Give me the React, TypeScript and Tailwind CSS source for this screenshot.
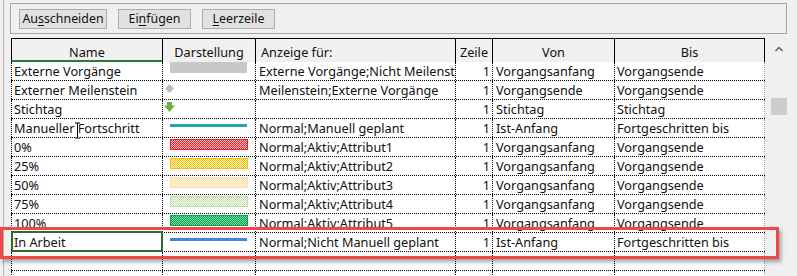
type Row = {
  name: string;
  sym: "gray" | "diamond" | "arrow" | "teal" | "red" | "orange" | "cream" | "lime" | "green" | "blue" | "";
  show: string;
  line: string;
  from: string;
  to: string;
};

const rows: Row[] = [
  { name: "Externe Vorgänge", sym: "gray", show: "Externe Vorgänge;Nicht Meilenstein", line: "1", from: "Vorgangsanfang", to: "Vorgangsende" },
  { name: "Externer Meilenstein", sym: "diamond", show: "Meilenstein;Externe Vorgänge", line: "1", from: "Vorgangsende", to: "Vorgangsende" },
  { name: "Stichtag", sym: "arrow", show: "", line: "1", from: "Stichtag", to: "Stichtag" },
  { name: "Manueller Fortschritt", sym: "teal", show: "Normal;Manuell geplant", line: "1", from: "Ist-Anfang", to: "Fortgeschritten bis" },
  { name: "0%", sym: "red", show: "Normal;Aktiv;Attribut1", line: "1", from: "Vorgangsanfang", to: "Vorgangsende" },
  { name: "25%", sym: "orange", show: "Normal;Aktiv;Attribut2", line: "1", from: "Vorgangsanfang", to: "Vorgangsende" },
  { name: "50%", sym: "cream", show: "Normal;Aktiv;Attribut3", line: "1", from: "Vorgangsanfang", to: "Vorgangsende" },
  { name: "75%", sym: "lime", show: "Normal;Aktiv;Attribut4", line: "1", from: "Vorgangsanfang", to: "Vorgangsende" },
  { name: "100%", sym: "green", show: "Normal;Aktiv;Attribut5", line: "1", from: "Vorgangsanfang", to: "Vorgangsende" },
  { name: "In Arbeit", sym: "blue", show: "Normal;Nicht Manuell geplant", line: "1", from: "Ist-Anfang", to: "Fortgeschritten bis" },
  { name: "", sym: "", show: "", line: "", from: "", to: "" },
  { name: "", sym: "", show: "", line: "", from: "", to: "" },
];

const hatch: Record<string, [string, string, string]> = {
  red: ["#ee1c24", "#ee1c24", "#fbc8c8"],
  orange: ["#ffc000", "#ffc000", "#fff6dc"],
  cream: ["#fbdda6", "#fbdba0", "#fffaf0"],
  lime: ["#bfdfaa", "#bcdda6", "#ffffff"],
  green: ["#00a550", "#00a550", "#86d8a6"],
};

function Hatch({ id }: { id: string }) {
  const [stroke, a, b] = hatch[id];
  return (
    <svg width="78" height="11" shapeRendering="crispEdges" className="block">
      <defs>
        <pattern id={"p-" + id} width="2" height="2" patternUnits="userSpaceOnUse">
          <rect width="2" height="2" fill={b} />
          <rect width="1" height="1" fill={a} />
          <rect x="1" y="1" width="1" height="1" fill={a} />
        </pattern>
      </defs>
      <rect x="0.5" y="0.5" width="77" height="10" fill={`url(#p-${id})`} stroke={stroke} />
    </svg>
  );
}

function Symbol({ sym }: { sym: Row["sym"] }) {
  if (sym === "gray") return <div className="ml-[7px] w-[77px] h-[11px] bg-[#c8c8c8]" />;
  if (sym === "diamond")
    return (
      <div className="pl-[2px] pt-[3px]">
        <svg width="9" height="9" className="block">
          <polygon points="4.5,0 9,4.5 4.5,9 0,4.5" fill="#bdbdbd" />
        </svg>
      </div>
    );
  if (sym === "arrow")
    return (
      <div className="pl-px pt-[2px]">
        <svg width="11" height="10" className="block">
          <rect x="3" y="0" width="5" height="4" fill="#72ad44" />
          <polygon points="0,3.5 11,3.5 5.5,10" fill="#72ad44" />
        </svg>
      </div>
    );
  if (sym === "teal") return <div className="ml-[7px] w-[77px] h-[3px] mt-[5px] bg-[#27a2ae]" />;
  if (sym === "blue") return <div className="ml-[7px] w-[77px] h-[3px] mt-[5px] bg-[#3d87d6]" />;
  if (sym in hatch)
    return (
      <div className="ml-[7px] mt-px">
        <Hatch id={sym} />
      </div>
    );
  return null;
}

function Btn({ pre, key1, post }: { pre: string; key1: string; post: string }) {
  return (
    <div className="h-[20px] px-[6px] border border-[#adadad] bg-[#e1e1e1] flex items-center justify-center leading-[18px]">
      {pre}
      <span className="underline underline-offset-2 decoration-1">{key1}</span>
      {post}
    </div>
  );
}

const dot = "border-l border-dotted border-black";

export default function App() {
  return (
    <div className="w-[797px] h-[276px] bg-[#f0f0f0] relative overflow-hidden flex text-[12.7px] text-[#111] font-['Noto_Sans',sans-serif]">
      {/* left gutter */}
      <div className="w-[10px] shrink-0 pl-[3px]">
        <div className="w-px h-full bg-[#b4b4b4]" />
      </div>

      <div className="flex flex-col pt-[3px]">
        {/* toolbar box */}
        <div className="w-[777px] h-[31px] shrink-0 border border-[#a5a5a5] flex items-start gap-[11px] pl-[8px] pt-[5px] text-[12.4px]">
          <div className="w-[88px]"><Btn pre="Au" key1="s" post="schneiden" /></div>
          <div className="w-[73px]"><Btn pre="Ei" key1="n" post="fügen" /></div>
          <div className="w-[73px]"><Btn pre="" key1="L" post="eerzeile" /></div>
        </div>

        <div className="flex mt-[4px]">
          {/* table */}
          <div className="w-[754px] ml-px bg-white overflow-hidden h-[238px]">
            <div className="flex h-[24px] border-t border-black bg-[#f0f0f0]">
              <div className="w-[151px] border-l border-black border-b-2 border-b-[#2c7a34] text-center pt-[4px] leading-[18px]">Name</div>
              <div className="w-[93px] border-l border-black text-center pt-[4px] leading-[18px]">Darstellung</div>
              <div className="w-[200px] border-l border-black pl-[5px] pt-[4px] leading-[18px]">Anzeige für:</div>
              <div className="w-[37px] border-l border-black text-center pt-[4px] leading-[18px]">Zeile</div>
              <div className="w-[122px] border-l border-black text-center pt-[4px] leading-[18px]">Von</div>
              <div className="w-[151px] border-l border-r border-black text-center pt-[4px] leading-[18px]">Bis</div>
            </div>
            {rows.map((r, i) => (
              <div key={i} className="flex h-[19px] border-b border-dotted border-black leading-[18px] whitespace-nowrap">
                <div className={`w-[151px] ${dot} pl-[2px] relative`}>
                  {r.name}
                  {r.name === "In Arbeit" && (
                    <div className="absolute -left-px -top-[2px] w-[152px] h-[21px] border-2 border-[#2f6b31]" />
                  )}
                  {r.name === "Manueller Fortschritt" && (
                    <svg width="7" height="18" className="absolute left-[62px] top-[3px]">
                      <path d="M1 1h5M3.5 1v15M1 16h5" stroke="#fff" strokeWidth="3" fill="none" />
                      <path d="M1 1h5M3.5 1v15M1 16h5" stroke="#000" strokeWidth="1" fill="none" />
                    </svg>
                  )}
                </div>
                <div className={`w-[93px] ${dot} overflow-hidden`}>
                  <Symbol sym={r.sym} />
                </div>
                <div className={`w-[200px] ${dot} pl-[3px] overflow-hidden`}>{r.show}</div>
                <div className={`w-[37px] ${dot} text-right pr-[2px]`}>{r.line}</div>
                <div className={`w-[122px] ${dot} pl-[3px] overflow-hidden`}>{r.from}</div>
                <div className={`w-[151px] ${dot} border-r border-r-solid border-r-[#9a9a9a] pl-[2px] overflow-hidden`}>{r.to}</div>
              </div>
            ))}
          </div>

          {/* scrollbar */}
          <div className="w-[22px] pl-[6px] flex flex-col">
            <svg width="16" height="6" className="block mt-[8px]">
              <polyline points="4.5,5 8,1.5 11.5,5" fill="none" stroke="#606060" strokeWidth="1.5" />
            </svg>
            <div className="w-[16px] h-[17px] mt-[46px] bg-[#cdcdcd]" />
          </div>
        </div>
      </div>

      {/* highlight annotation */}
      <div className="absolute left-0 top-[227px] w-[779px] h-[32px] border-[3px] border-[#f04848] shadow-[2px_3px_4px_rgba(0,0,0,0.35)]" />
    </div>
  );
}
